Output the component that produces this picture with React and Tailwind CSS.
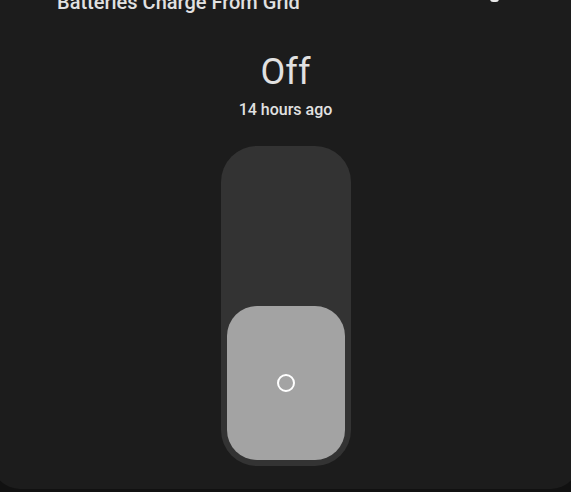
export default function App() {
  return (
    <div
      className="relative h-[492px] w-[571px] overflow-hidden bg-[#111111]"
      style={{ fontFamily: "Roboto, 'Liberation Sans', sans-serif" }}
    >
      <div className="relative -mx-2 flex h-[489px] flex-col items-center rounded-b-[28px] bg-[#1c1c1c]">
        <div className="-mt-[10px] w-full pl-[65px] text-[20px] font-medium leading-[24px] text-[#e1e1e1]">
          Batteries Charge From Grid
        </div>
        <div className="mt-[38px] text-[36px] font-normal leading-[40px] text-[#e1e1e1]">Off</div>
        <div className="mt-[6px] text-[16px] font-medium leading-[24px] text-[#e1e1e1]">14 hours ago</div>
        <div className="mt-[24px] flex h-[320px] w-[130px] flex-col justify-end rounded-[36px] bg-[#333333] p-[6px]">
          <div className="flex h-[154px] w-full items-center justify-center rounded-[30px] bg-[#a3a3a3]">
            <div className="h-[18px] w-[18px] rounded-full border-2 border-white" />
          </div>
        </div>
      </div>
      <div className="absolute left-[490px] top-[-4px] h-[6px] w-[9px] rounded-full bg-[#e8e8e8]" />
    </div>
  );
}
